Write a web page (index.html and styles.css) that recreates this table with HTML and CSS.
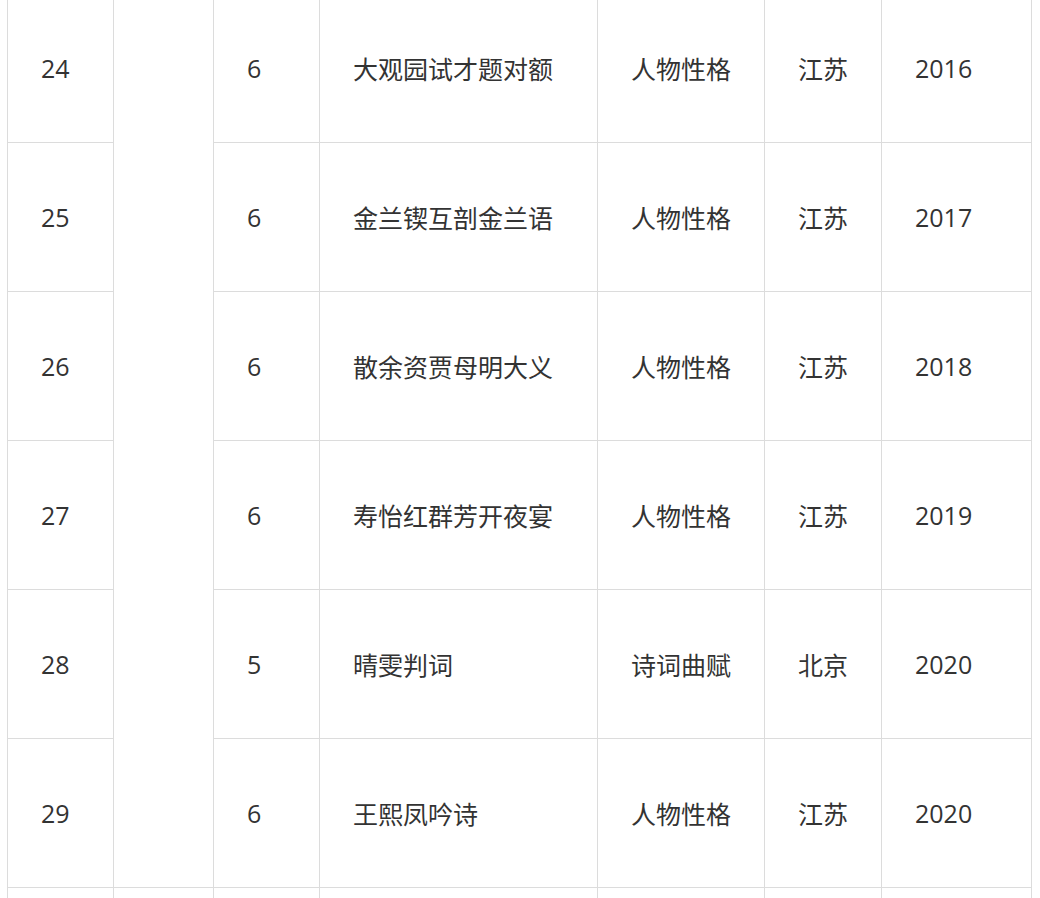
FILE: index.html
```html
<!DOCTYPE html>
<html lang="zh">
<head>
<meta charset="utf-8">
<link rel="stylesheet" href="styles.css">
</head>
<body>
<div class="wrap">
<table class="grid">
  <colgroup>
    <col class="c1"><col class="c2"><col class="c3"><col class="c4"><col class="c5"><col class="c6"><col class="c7">
  </colgroup>
  <tbody>
    <tr><td>24</td><td rowspan="6"></td><td>6</td><td>大观园试才题对额</td><td>人物性格</td><td>江苏</td><td>2016</td></tr>
    <tr><td>25</td><td>6</td><td>金兰锲互剖金兰语</td><td>人物性格</td><td>江苏</td><td>2017</td></tr>
    <tr><td>26</td><td>6</td><td>散余资贾母明大义</td><td>人物性格</td><td>江苏</td><td>2018</td></tr>
    <tr><td>27</td><td>6</td><td>寿怡红群芳开夜宴</td><td>人物性格</td><td>江苏</td><td>2019</td></tr>
    <tr><td>28</td><td>5</td><td>晴雯判词</td><td>诗词曲赋</td><td>北京</td><td>2020</td></tr>
    <tr><td>29</td><td>6</td><td>王熙凤吟诗</td><td>人物性格</td><td>江苏</td><td>2020</td></tr>
    <tr><td></td><td></td><td></td><td></td><td></td><td></td><td></td></tr>
  </tbody>
</table>
</div>
</body>
</html>
```
FILE: styles.css
```css
html, body {
  margin: 0;
  padding: 0;
  background: #fff;
  overflow: hidden;
}
.wrap {
  padding-left: 7px;
  margin-top: -7px;
}
.grid {
  border-collapse: collapse;
  table-layout: fixed;
  width: 1024px;
  font-family: "Open Sans", "Noto Sans CJK SC", sans-serif;
  font-size: 25px;
  color: #333;
}
.grid td {
  border: 1px solid #dcdcdc;
  height: 148px;
  padding: 0 0 0 33px;
  vertical-align: middle;
  text-align: left;
  white-space: nowrap;
}
.c1 { width: 106px; }
.c2 { width: 100px; }
.c3 { width: 106px; }
.c4 { width: 278px; }
.c5 { width: 167px; }
.c6 { width: 117px; }
.c7 { width: 150px; }
```
